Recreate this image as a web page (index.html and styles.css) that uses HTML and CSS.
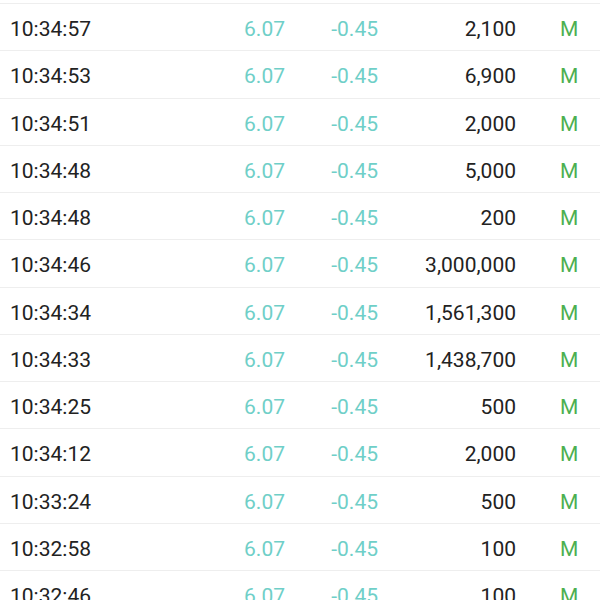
FILE: index.html
```html
<!DOCTYPE html>
<html>
<head>
<meta charset="utf-8">
<link rel="stylesheet" href="styles.css">
</head>
<body>
<div class="list">
  <div class="row"><span class="time">10:34:57</span><span class="price">6.07</span><span class="chg">-0.45</span><span class="vol">2,100</span><span class="flag">M</span></div>
  <div class="row"><span class="time">10:34:53</span><span class="price">6.07</span><span class="chg">-0.45</span><span class="vol">6,900</span><span class="flag">M</span></div>
  <div class="row"><span class="time">10:34:51</span><span class="price">6.07</span><span class="chg">-0.45</span><span class="vol">2,000</span><span class="flag">M</span></div>
  <div class="row"><span class="time">10:34:48</span><span class="price">6.07</span><span class="chg">-0.45</span><span class="vol">5,000</span><span class="flag">M</span></div>
  <div class="row"><span class="time">10:34:48</span><span class="price">6.07</span><span class="chg">-0.45</span><span class="vol">200</span><span class="flag">M</span></div>
  <div class="row"><span class="time">10:34:46</span><span class="price">6.07</span><span class="chg">-0.45</span><span class="vol">3,000,000</span><span class="flag">M</span></div>
  <div class="row"><span class="time">10:34:34</span><span class="price">6.07</span><span class="chg">-0.45</span><span class="vol">1,561,300</span><span class="flag">M</span></div>
  <div class="row"><span class="time">10:34:33</span><span class="price">6.07</span><span class="chg">-0.45</span><span class="vol">1,438,700</span><span class="flag">M</span></div>
  <div class="row"><span class="time">10:34:25</span><span class="price">6.07</span><span class="chg">-0.45</span><span class="vol">500</span><span class="flag">M</span></div>
  <div class="row"><span class="time">10:34:12</span><span class="price">6.07</span><span class="chg">-0.45</span><span class="vol">2,000</span><span class="flag">M</span></div>
  <div class="row"><span class="time">10:33:24</span><span class="price">6.07</span><span class="chg">-0.45</span><span class="vol">500</span><span class="flag">M</span></div>
  <div class="row"><span class="time">10:32:58</span><span class="price">6.07</span><span class="chg">-0.45</span><span class="vol">100</span><span class="flag">M</span></div>
  <div class="row"><span class="time">10:32:46</span><span class="price">6.07</span><span class="chg">-0.45</span><span class="vol">100</span><span class="flag">M</span></div>
</div>
</body>
</html>
```
FILE: styles.css
```css
html, body {
  margin: 0;
  padding: 0;
  background: #ffffff;
  overflow: hidden;
  height: 600px;
}
.list {
  padding-top: 3px;
  font-family: Roboto, "Liberation Sans", sans-serif;
  font-size: 21px;
}
.row {
  display: flex;
  align-items: center;
  height: 47.25px;
  box-sizing: border-box;
  border-top: 1px solid #eeeeee;
  padding-left: 10px;
  padding-top: 4px;
}
.time {
  width: 200px;
  color: #222222;
}
.price {
  width: 75px;
  text-align: right;
  color: #6fcfc8;
}
.chg {
  width: 93px;
  text-align: right;
  color: #6fcfc8;
}
.vol {
  width: 138px;
  text-align: right;
  color: #222222;
}
.flag {
  margin-left: 44px;
  color: #4caf50;
}
```
